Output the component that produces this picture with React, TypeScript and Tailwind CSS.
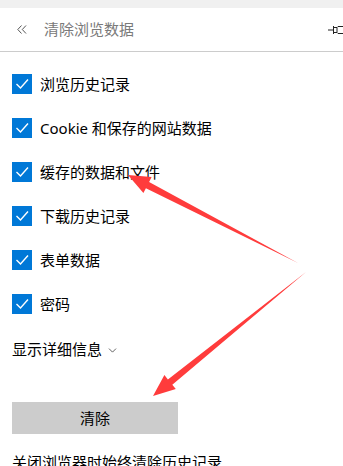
import { ChevronDown } from 'lucide-react';

const items = ['浏览历史记录', 'Cookie 和保存的网站数据', '缓存的数据和文件', '下载历史记录', '表单数据', '密码'];

function CheckBox() {
  return (
    <span className="w-5 h-5 bg-[#0078d7] flex items-center justify-center shrink-0">
      <svg width="20" height="20" viewBox="0 0 20 20" fill="none">
        <polyline points="4.5,10 8.5,14 16,5.5" stroke="white" strokeWidth="1.4" />
      </svg>
    </span>
  );
}

export default function App() {
  return (
    <div
      className="relative w-[343px] h-[466px] overflow-hidden bg-white text-[15px] text-black"
      style={{ fontFamily: '"Noto Sans", "Noto Sans CJK SC", sans-serif' }}
    >
      <div className="h-2 bg-[#f0f0f0]" />

      {/* Header */}
      <div className="h-[44px] flex items-center border-b border-[#cccccc] pl-[17px]">
        <svg className="mr-[17px]" width="10" height="9" viewBox="0 0 10 9" fill="none">
          <polyline points="4.5,0.5 0.8,4.5 4.5,8.5" stroke="#444" strokeWidth="0.9" />
          <polyline points="9,0.5 5.3,4.5 9,8.5" stroke="#444" strokeWidth="0.9" />
        </svg>
        <span className="text-[#7a7a7a] text-[15px]">清除浏览数据</span>
        <svg className="ml-auto" width="15" height="12" viewBox="0 0 15 12" fill="none">
          <line x1="0" y1="6" x2="5" y2="6" stroke="#222" strokeWidth="1" />
          <line x1="5.5" y1="2" x2="5.5" y2="10" stroke="#222" strokeWidth="1" />
          <path d="M6 3.5 H9 L10 2.5 H15 M6 8.5 H9 L10 9.5 H15 M9 3.5 V8.5" stroke="#222" strokeWidth="1" />
        </svg>
      </div>

      {/* Options */}
      <div className="pt-[10px] px-3">
        {items.map(label => (
          <div key={label} className="h-11 flex items-center gap-2">
            <CheckBox />
            <span className="leading-none">{label}</span>
          </div>
        ))}
        <div className="mt-[12px] h-[22px] flex items-center gap-1">
          <span>显示详细信息</span>
          <ChevronDown size={13} strokeWidth={1.3} className="text-[#222] mt-[2px]" />
        </div>
        <button className="mt-[42px] w-[166px] h-8 bg-[#cccccc] flex items-center justify-center">
          清除
        </button>
        <div className="mt-[17px] leading-[22px] whitespace-nowrap">关闭浏览器时始终清除历史记录</div>
      </div>

      {/* Annotation arrows */}
      <svg className="absolute inset-0 pointer-events-none" width="343" height="466">
        <polygon
          points="298,263 149.1,182 151.6,177.1 128,175 143.4,193.1 145.9,188.2"
          fill="#ff3c3c"
        />
        <polygon
          points="306,272 167.9,379.4 164.4,375.1 153,396 175.8,389.1 172.3,384.8"
          fill="#ff3c3c"
        />
      </svg>
    </div>
  );
}
